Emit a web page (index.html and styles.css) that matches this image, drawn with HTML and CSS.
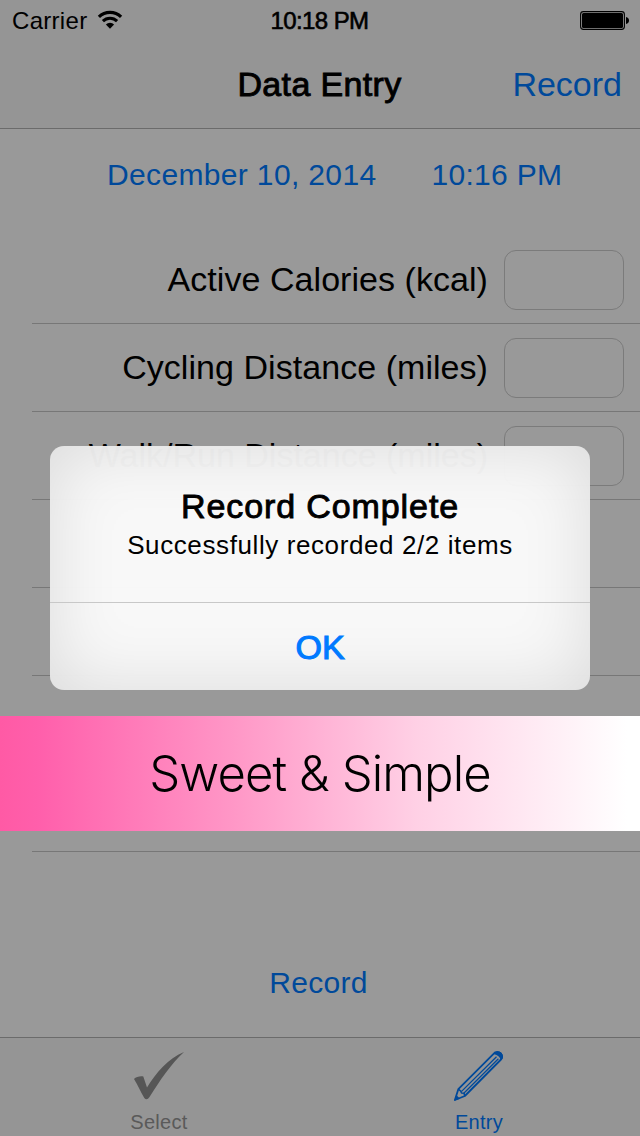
FILE: index.html
```html
<!DOCTYPE html>
<html lang="en">
<head>
<meta charset="utf-8">
<title>Data Entry</title>
<link rel="stylesheet" href="styles.css">
</head>
<body>
<div class="screen">
  <header class="header">
    <div class="status">
      <div class="carrier">
        <span class="carrier-name">Carrier</span>
        <svg class="wifi" width="26" height="20" viewBox="0 0 26 20">
          <path d="M1.9 6.900 A16 16 0 0 1 24.100 6.900" fill="none" stroke="#000" stroke-width="3.200"/>
          <path d="M5.900 11.100 A10 10 0 0 1 20.100 11.100" fill="none" stroke="#000" stroke-width="3"/>
          <path d="M8.900 14.400 A5.800 5.800 0 0 1 17.100 14.400 L13 18.800 Z"/>
        </svg>
      </div>
      <span class="clock">10:18 PM</span>
      <svg class="battery" width="49" height="20" viewBox="0 0 49 20">
        <rect x=".6" y=".6" width="43.8" height="17.8" rx="2.8" fill="none" stroke="#000" stroke-width="1.1"/>
        <rect x="2" y="2" width="41" height="15" rx="1.5"/>
        <path d="M46 6 Q49 6.600 49 9.500 Q49 12.400 46 13 Z"/>
      </svg>
    </div>
    <div class="nav">
      <h1 class="title">Data Entry</h1>
      <a class="nav-action">Record</a>
    </div>
  </header>

  <main class="form">
    <div class="when"><a class="date">December 10, 2014</a><a class="time">10:16 PM</a></div>
    <div class="rows">
      <div class="row"><span class="label">Active Calories (kcal)</span><span class="field"></span></div>
      <div class="row"><span class="label">Cycling Distance (miles)</span><span class="field"></span></div>
      <div class="row"><span class="label label-tight">Walk/Run Distance (miles)</span><span class="field"></span></div>
      <div class="row"></div>
      <div class="row"></div>
      <div class="row"></div>
      <div class="row"></div>
    </div>
    <div class="submit"><a class="submit-link">Record</a></div>
  </main>

  <footer class="tabs">
    <div class="tab">
      <svg class="tab-icon" width="60" height="60" viewBox="0 0 60 60">
        <path d="M5 33 C7 30.800 11 29.800 14.300 30.400 L18 41.500 C27 27 39 12.500 55 6 C43.500 16 30.500 35 20.500 51 L19 52.800 Q17 54 15.300 52 C11.500 46 9 39 5 33 Z" fill="#565656"/>
      </svg>
      <span class="tab-label">Select</span>
    </div>
    <div class="tab tab-active">
      <svg class="tab-icon" width="60" height="60" viewBox="0 0 60 60">
        <g fill="none" stroke="#00499a" stroke-width="1.8" stroke-linejoin="round">
          <path d="M5.900 54 L9.300 43.200 L45.800 6.600 Q49 4.700 51.800 7.500 Q54.300 10.600 52 13.500 L15.800 50 Z"/>
          <path d="M9.300 43.200 L11.500 44.800 L12.500 47 L15 47.200 L15.800 50" stroke-width="1.500"/>
          <path d="M12.300 45.600 L47.500 10.800" stroke-width="1.300"/>
          <path d="M14.800 47.200 L49.400 12.800" stroke-width="1.200"/>
        </g>
        <path d="M44.500 8 Q48.500 3.600 52.600 7 Q56 11.500 51.500 14.500 Q51.500 9.500 44.500 8 Z M5.200 54.800 L7.300 49 L11 52.700 Z" fill="#00499a"/>
      </svg>
      <span class="tab-label">Entry</span>
    </div>
  </footer>

  <section class="alert">
    <div class="alert-body">
      <h2 class="alert-title">Record Complete</h2>
      <p class="alert-text">Successfully recorded 2/2 items</p>
    </div>
    <div class="alert-button">OK</div>
  </section>

  <div class="banner"><span class="banner-text">Sweet &amp; Simple</span></div>
</div>
</body>
</html>
```

FILE: styles.css
```css
* { box-sizing: border-box; }
body { margin: 0; font-family: "Liberation Sans", Arial, sans-serif; color: #000; }
h1, h2, p { margin: 0; font-weight: 400; }
.screen { position: relative; width: 640px; height: 1136px; overflow: hidden; background: #999; display: flex; flex-direction: column; white-space: nowrap; }

.header { height: 129px; flex: none; background: #959595; border-bottom: 1px solid #6b6b6b; }
.status { height: 42px; display: grid; grid-template-columns: 1fr auto 1fr; align-items: center; padding: 0 11px 0 12px; font-size: 24px; line-height: 42px; }
.carrier { display: flex; align-items: center; gap: 10px; }
.wifi { margin-bottom: 2px; }
.carrier-name { letter-spacing: .3px; }
.clock { letter-spacing: -.6px; -webkit-text-stroke: .6px #000; margin-right: 2px; }
.battery { justify-self: end; }
.nav { height: 84px; display: grid; grid-template-columns: 1fr auto 1fr; align-items: center; padding: 0 18px 0 17px; font-size: 34px; line-height: 84px; }
.title { grid-column: 2; font-size: 34px; letter-spacing: .35px; -webkit-text-stroke: .9px #000; }
.nav-action { justify-self: end; color: #00499a; }

.form { flex: 1; }
.when { height: 107px; padding: 28px 0 0 107px; display: flex; gap: 55px; font-size: 30px; line-height: 36px; color: #00499a; }
.date { letter-spacing: .35px; }
.time { letter-spacing: .3px; }
.rows { padding-left: 32px; }
.row { height: 88px; border-bottom: 1px solid #777; display: flex; justify-content: flex-end; align-items: center; gap: 16px; padding-right: 16px; }
.label { font-size: 34px; letter-spacing: .05px; }
.label-tight { letter-spacing: 0; }
.field { width: 120px; height: 60px; border: 1px solid #7b7b7b; border-radius: 12px; }
.submit { height: 185px; padding: 113px 3px 0 0; text-align: center; font-size: 30px; line-height: 36px; color: #00499a; }
.submit-link { letter-spacing: .3px; }

.tabs { height: 99px; flex: none; border-top: 1px solid #6b6b6b; background: #959595; display: flex; color: #5a5a5a; }
.tab { flex: 1; display: flex; flex-direction: column; align-items: center; padding: 8px 2px 0 0; }
.tab-icon { display: block; }
.tab-label { font-size: 20px; line-height: 24px; letter-spacing: .3px; padding-top: 4px; }
.tab-active { color: #00499a; }

.alert { position: absolute; left: 50px; top: 446px; width: 540px; height: 244px; border-radius: 14px; background: rgba(250, 250, 250, .975); box-shadow: inset 0 0 70px rgba(0, 0, 0, .12); text-align: center; }
.alert-body { height: 157px; padding-top: 40px; border-bottom: 1px solid #c8c8c8; }
.alert-title { font-size: 34px; line-height: 40px; letter-spacing: .9px; -webkit-text-stroke: .9px #000; }
.alert-text { font-size: 26px; line-height: 38px; letter-spacing: .6px; }
.alert-button { font-size: 34px; line-height: 88px; color: #007aff; -webkit-text-stroke: 1.1px #007aff; }

.banner { position: absolute; left: 0; top: 716px; width: 640px; height: 115px; background: linear-gradient(90deg, #ff5aa5 0%, #ff5fab 6%, #ff98c7 37%, #ffd0e5 65%, #fff 98%); text-align: center; line-height: 115px; }
.banner-text { font-family: Inter, "Liberation Sans", sans-serif; font-weight: 300; font-size: 49px; letter-spacing: -.9px; }
```
